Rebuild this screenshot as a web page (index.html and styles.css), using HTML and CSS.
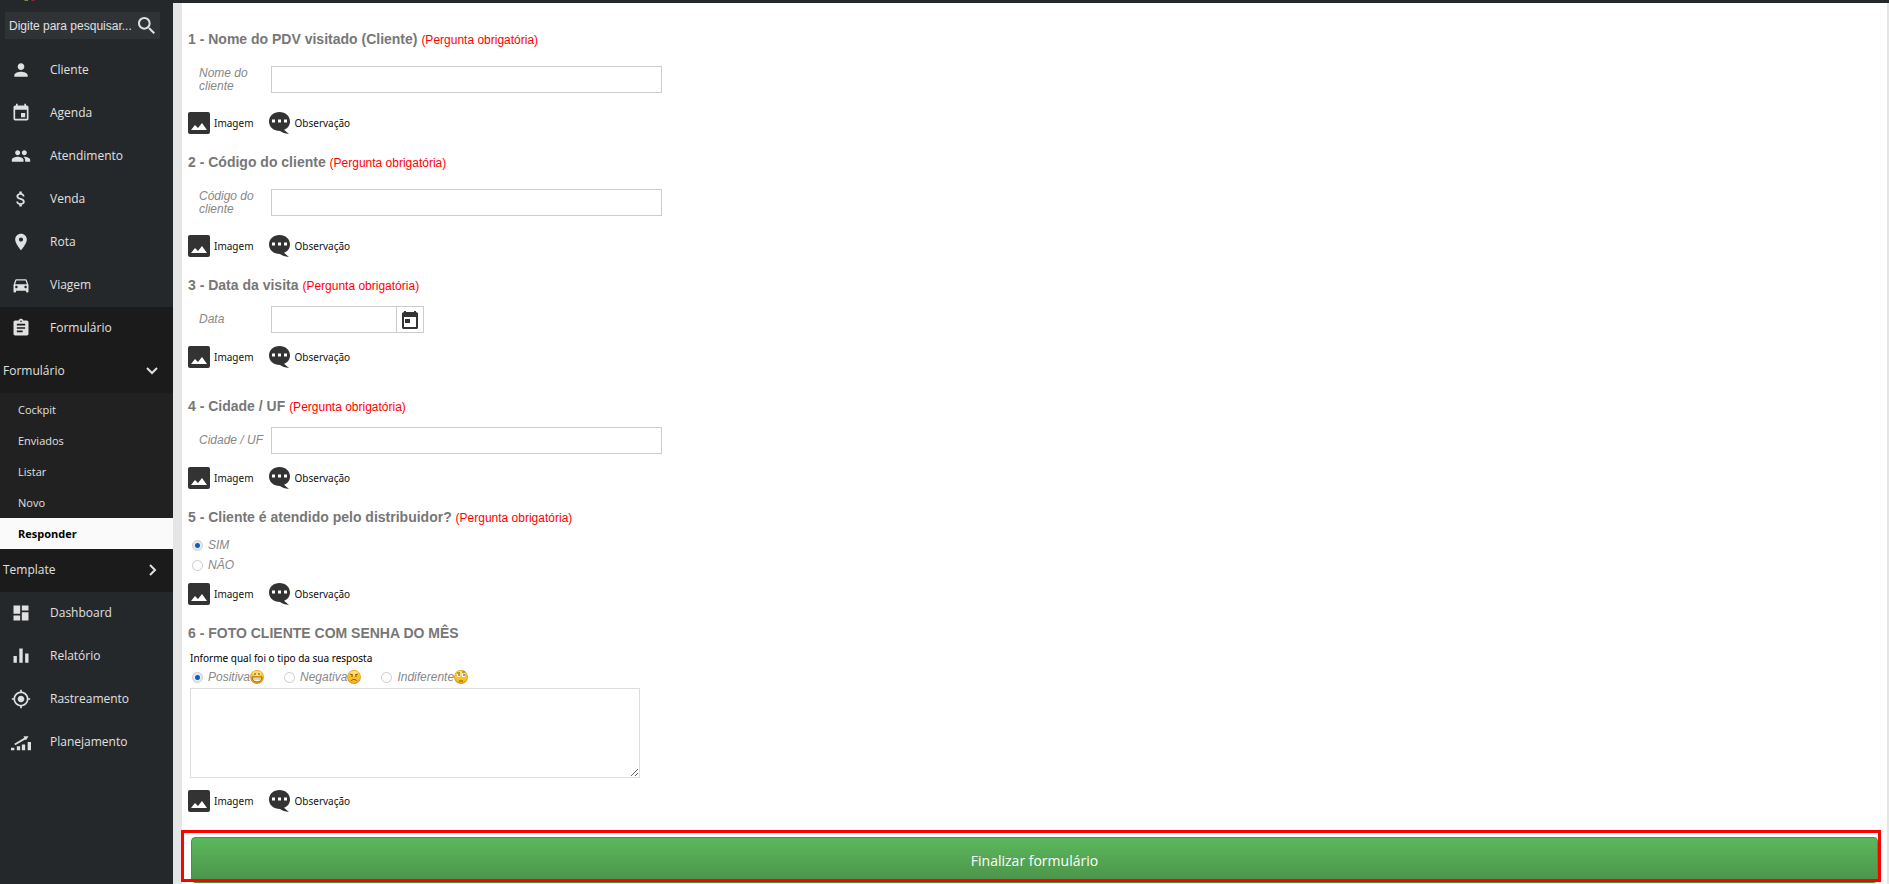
FILE: index.html
```html
<!DOCTYPE html>
<html lang="pt-BR">
<head>
    <meta charset="UTF-8">
    <meta name="viewport" content="width=device-width, initial-scale=1.0">
    <title>Responder formulário</title>
    <link rel="stylesheet" href="styles.css">
</head>
<body>
    <!-- shared icons -->
    <svg class="sprite" aria-hidden="true">
        <symbol id="i-image" viewBox="0 0 22 22">
            <rect width="22" height="22" rx="2" fill="#333"/>
            <path d="M3 18l4-5 3 3 4-5 5 7z" fill="#fff"/>
        </symbol>
        <symbol id="i-chat" viewBox="0 0 22 22">
            <path d="M10.500 0C16.500 0 21 4 21 9.500c0 4-2.500 7-6 8.300L20 22c-4-.3-7-1.500-9-3C4.500 19 0 15 0 9.500S4.500 0 10.500 0z" fill="#333"/>
            <path d="M3 7.500h3v3H3zM9 7.500h3v3H9zM15 7.500h3v3h-3z" fill="#fff"/>
        </symbol>
        <symbol id="i-face" viewBox="0 0 14 14">
            <circle cx="7" cy="7" r="6.900" fill="#dd9612"/>
            <circle cx="7" cy="6.500" r="6.200" fill="#f9c02a"/>
            <ellipse cx="7" cy="3.500" rx="4.500" ry="2.600" fill="#ffdf70"/>
        </symbol>
    </svg>

    <div id="header">
        <svg class="logo" viewBox="0 0 12 1"><path d="M0 0h4v1H1z" fill="#7d8a3a"/><path d="M7 0h4l-1 1H8z" fill="#8c2a35"/></svg>
    </div>

    <div id="page">
        <div id="sidebar">
            <form class="search">
                <input type="text" placeholder="Digite para pesquisar..." aria-label="Digite para pesquisar">
                <button type="button" aria-label="Pesquisar">
                    <svg viewBox="3 3 17.500 17.500"><path d="M15.500 14h-.79l-.28-.27C15.410 12.590 16 11.110 16 9.500 16 5.910 13.090 3 9.500 3S3 5.910 3 9.500 5.910 16 9.500 16c1.610 0 3.090-.59 4.230-1.570l.27.28v.79l5 4.990L20.490 19l-4.990-5zm-6 0C7.010 14 5 11.990 5 9.500S7.010 5 9.500 5 14 7.010 14 9.500 11.990 14 9.500 14z"/></svg>
                </button>
            </form>
            <ul class="menu">
                <li><a href="#"><svg viewBox="0 0 24 24"><path d="M12 12c2.210 0 4-1.790 4-4s-1.790-4-4-4-4 1.790-4 4 1.790 4 4 4zm0 2c-2.670 0-8 1.340-8 4v2h16v-2c0-2.660-5.330-4-8-4z"/></svg>Cliente</a></li>
                <li><a href="#"><svg viewBox="0 0 24 24"><path d="M17 12h-5v5h5v-5zM16 1v2H8V1H6v2H5c-1.110 0-1.990.9-1.990 2L3 19c0 1.100.89 2 2 2h14c1.100 0 2-.9 2-2V5c0-1.100-.9-2-2-2h-1V1h-2zm3 18H5V8h14v11z"/></svg>Agenda</a></li>
                <li><a href="#"><svg viewBox="0 0 24 24"><path d="M16 11c1.660 0 2.990-1.340 2.990-3S17.660 5 16 5c-1.660 0-3 1.340-3 3s1.340 3 3 3zm-8 0c1.660 0 2.990-1.340 2.990-3S9.660 5 8 5C6.340 5 5 6.340 5 8s1.340 3 3 3zm0 2c-2.330 0-7 1.170-7 3.500V19h14v-2.500c0-2.330-4.670-3.500-7-3.500zm8 0c-.29 0-.62.020-.97.050 1.160.84 1.970 1.970 1.970 3.450V19h6v-2.500c0-2.330-4.670-3.500-7-3.500z"/></svg>Atendimento</a></li>
                <li><a href="#"><svg viewBox="0 0 24 24"><path d="M11.800 10.900c-2.270-.59-3-1.200-3-2.150 0-1.090 1.010-1.850 2.700-1.850 1.780 0 2.440.85 2.500 2.100h2.210c-.07-1.720-1.120-3.300-3.210-3.810V3h-3v2.160c-1.940.42-3.500 1.680-3.500 3.610 0 2.310 1.910 3.460 4.700 4.130 2.500.6 3 1.480 3 2.410 0 .69-.49 1.790-2.700 1.790-2.060 0-2.870-.92-2.980-2.100h-2.200c.12 2.190 1.760 3.420 3.680 3.830V21h3v-2.150c1.950-.37 3.500-1.500 3.500-3.550 0-2.840-2.430-3.810-4.700-4.400z"/></svg>Venda</a></li>
                <li><a href="#"><svg viewBox="0 0 24 24"><path d="M12 2C8.130 2 5 5.130 5 9c0 5.250 7 13 7 13s7-7.750 7-13c0-3.870-3.130-7-7-7zm0 9.500c-1.380 0-2.500-1.120-2.500-2.500s1.120-2.500 2.500-2.500 2.500 1.120 2.500 2.500-1.120 2.500-2.500 2.500z"/></svg>Rota</a></li>
                <li><a href="#"><svg viewBox="0 0 24 24"><path d="M18.920 6.010C18.720 5.420 18.160 5 17.500 5h-11c-.66 0-1.210.42-1.420 1.010L3 12v8c0 .55.45 1 1 1h1c.55 0 1-.45 1-1v-1h12v1c0 .55.45 1 1 1h1c.55 0 1-.45 1-1v-8l-2.080-5.990zM6.500 16c-.83 0-1.500-.67-1.500-1.500S5.670 13 6.500 13s1.500.67 1.500 1.500S7.330 16 6.500 16zm11 0c-.83 0-1.500-.67-1.500-1.500s.67-1.500 1.500-1.500 1.500.67 1.500 1.500-.67 1.500-1.500 1.500zM5 11l1.500-4.500h11L19 11H5z"/></svg>Viagem</a></li>
                <li class="open">
                    <a href="#"><svg viewBox="0 0 24 24"><path d="M19 3h-4.180C14.400 1.840 13.300 1 12 1c-1.300 0-2.400.84-2.820 2H5c-1.100 0-2 .9-2 2v14c0 1.100.9 2 2 2h14c1.100 0 2-.9 2-2V5c0-1.100-.9-2-2-2zm-7 0c.55 0 1 .45 1 1s-.45 1-1 1-1-.45-1-1 .45-1 1-1zm2 14H7v-2h7v2zm3-4H7v-2h10v2zm0-4H7V7h10v2z"/></svg>Formulário</a>
                    <a href="#" class="group">Formulário<svg viewBox="0 0 12 12"><path d="M1 3l5 5 5-5"/></svg></a>
                    <ul class="submenu">
                        <li><a href="#">Cockpit</a></li>
                        <li><a href="#">Enviados</a></li>
                        <li><a href="#">Listar</a></li>
                        <li><a href="#">Novo</a></li>
                        <li><a href="#" class="current">Responder</a></li>
                    </ul>
                    <a href="#" class="group">Template<svg viewBox="0 0 12 12"><path d="M4 1l5 5-5 5"/></svg></a>
                </li>
                <li><a href="#"><svg viewBox="0 0 24 24"><path d="M3 13h8V3H3v10zm0 8h8v-6H3v6zm10 0h8V11h-8v10zm0-18v6h8V3h-8z"/></svg>Dashboard</a></li>
                <li><a href="#"><svg viewBox="0 0 24 24"><path d="M3 12h4v8H3zM10 3h4v17h-4zM17 9h4v11h-4z"/></svg>Relatório</a></li>
                <li><a href="#"><svg viewBox="0 0 24 24"><path d="M12 8c-2.210 0-4 1.790-4 4s1.790 4 4 4 4-1.790 4-4-1.790-4-4-4zm8.940 3c-.46-4.170-3.770-7.480-7.940-7.940V1h-2v2.060C6.830 3.520 3.520 6.830 3.060 11H1v2h2.060c.46 4.170 3.770 7.480 7.940 7.940V23h2v-2.060c4.170-.46 7.480-3.770 7.940-7.940H23v-2h-2.060zM12 19c-3.870 0-7-3.130-7-7s3.130-7 7-7 7 3.130 7 7-3.130 7-7 7z"/></svg>Rastreamento</a></li>
                <li><a href="#"><svg viewBox="0 0 24 24"><path d="M0 19h4v3H0zM7 17h4v5H7zM13 15h4v7h-4zM20 12h4v10h-4zM4 14L16 7l-1-2h6l-3 5-1-1L5 16z"/></svg>Planejamento</a></li>
            </ul>
        </div>

        <form id="content">
            <div class="question">
                <h2>1 - Nome do PDV visitado (Cliente) <span>(Pergunta obrigatória)</span></h2>
                <div class="field tall">
                    <label for="nome">Nome do cliente</label>
                    <input type="text" id="nome">
                </div>
                <div class="actions">
                    <button type="button"><svg><use href="#i-image"/></svg>Imagem</button>
                    <button type="button"><svg><use href="#i-chat"/></svg>Observação</button>
                </div>
            </div>

            <div class="question">
                <h2>2 - Código do cliente <span>(Pergunta obrigatória)</span></h2>
                <div class="field tall">
                    <label for="codigo">Código do cliente</label>
                    <input type="text" id="codigo">
                </div>
                <div class="actions">
                    <button type="button"><svg><use href="#i-image"/></svg>Imagem</button>
                    <button type="button"><svg><use href="#i-chat"/></svg>Observação</button>
                </div>
            </div>

            <div class="question date">
                <h2>3 - Data da visita <span>(Pergunta obrigatória)</span></h2>
                <div class="field">
                    <label for="data">Data</label>
                    <input type="text" id="data">
                    <button type="button" class="calendar" aria-label="Abrir calendário">
                        <svg viewBox="0 0 16 18"><path d="M2 0h2v1h8V0h2v1l2 1v15l-1 1H1l-1-1V2l2-1zM2 6v10h12V6zM3 8h5v4H3z" fill="#333" fill-rule="evenodd"/><path d="M3 8h5v4H3z" fill="#333"/></svg>
                    </button>
                </div>
                <div class="actions">
                    <button type="button"><svg><use href="#i-image"/></svg>Imagem</button>
                    <button type="button"><svg><use href="#i-chat"/></svg>Observação</button>
                </div>
            </div>

            <div class="question">
                <h2>4 - Cidade / UF <span>(Pergunta obrigatória)</span></h2>
                <div class="field">
                    <label for="cidade">Cidade / UF</label>
                    <input type="text" id="cidade">
                </div>
                <div class="actions">
                    <button type="button"><svg><use href="#i-image"/></svg>Imagem</button>
                    <button type="button"><svg><use href="#i-chat"/></svg>Observação</button>
                </div>
            </div>

            <div class="question">
                <h2>5 - Cliente é atendido pelo distribuidor? <span>(Pergunta obrigatória)</span></h2>
                <div class="options">
                    <label><input type="radio" name="distribuidor" checked>SIM</label>
                    <label><input type="radio" name="distribuidor">NÃO</label>
                </div>
                <div class="actions">
                    <button type="button"><svg><use href="#i-image"/></svg>Imagem</button>
                    <button type="button"><svg><use href="#i-chat"/></svg>Observação</button>
                </div>
            </div>

            <div class="question">
                <h2>6 - FOTO CLIENTE COM SENHA DO MÊS</h2>
                <p>Informe qual foi o tipo da sua resposta</p>
                <div class="moods">
                    <label><input type="radio" name="tipo" checked>Positiva<svg viewBox="0 0 14 14"><use href="#i-face"/><path d="M4 4h2M8 4h2" stroke="#6b3f08"/><path d="M2 7h10c0 3-2 5-5 5S2 10 2 7z" fill="#fff" stroke="#9a5a08"/><path d="M3 9h8" stroke="#c9a25a"/></svg></label>
                    <label><input type="radio" name="tipo">Negativa<svg viewBox="0 0 14 14"><use href="#i-face"/><path d="M3 4l3 1M11 4L8 5M4 6h2M8 6h2M4 11c1-2 5-2 6 0" stroke="#85500c" fill="none"/></svg></label>
                    <label><input type="radio" name="tipo">Indiferente<svg viewBox="0 0 14 14"><use href="#i-face"/><path d="M3 3h3M8 2h3M5 11h4" stroke="#85500c"/><path d="M3 4h3v3H3zM8 4h3v3H8z" fill="#fff"/><path d="M5 4v2M10 4v2" stroke="#4a2b05"/></svg></label>
                </div>
                <textarea aria-label="Resposta"></textarea>
                <div class="actions">
                    <button type="button"><svg><use href="#i-image"/></svg>Imagem</button>
                    <button type="button"><svg><use href="#i-chat"/></svg>Observação</button>
                </div>
            </div>

            <div class="finish">
                <button type="button">Finalizar formulário</button>
            </div>
        </form>
    </div>
</body>
</html>
```

FILE: styles.css
```css
*{
    margin: 0;
    padding: 0;
    box-sizing: border-box;
}
body{
    display: flex;
    flex-direction: column;
    min-height: 100vh;
    background-color: #e5e5e5;
    font-family: "Open Sans", sans-serif;
    font-size: 12px;
}
ul{
    list-style: none;
}
a{
    color: inherit;
    text-decoration: none;
}
button{
    border: 0;
    background: none;
    font-family: inherit;
    cursor: pointer;
}
.sprite{
    position: absolute;
    width: 0;
    height: 0;
}

#header{
    height: 3px;
    padding-left: 24px;
    background-color: #24282b;
}
.logo{
    display: block;
    width: 12px;
    height: 1px;
}
#page{
    display: flex;
    flex: 1;
}

/* sidebar */
#sidebar{
    width: 173px;
    flex-shrink: 0;
    padding-top: 9px;
    background-color: #24282b;
    color: #e0e0e0;
}
.search{
    display: flex;
    align-items: center;
    height: 27px;
    margin: 0 13px 10px 5px;
    padding: 0 5px 0 4px;
    background-color: #2f3336;
}
.search input{
    flex: 1;
    min-width: 0;
    border: 0;
    outline: 0;
    background: none;
    color: #e0e0e0;
    font-family: "Liberation Sans", Arial, sans-serif;
    font-size: 12px;
}
.search input::placeholder{
    color: #e0e0e0;
}
.search svg{
    display: block;
    width: 17px;
    height: 17px;
    fill: #e0e0e0;
}
.menu a{
    display: flex;
    align-items: center;
    height: 43px;
    padding: 0 0 2px 11px;
}
.menu svg{
    width: 20px;
    height: 20px;
    margin-right: 19px;
    fill: #e0e0e0;
}
.menu .open{
    background-color: #1b1b1b;
}
.menu .group{
    justify-content: space-between;
    padding-left: 3px;
}
.menu .group svg{
    width: 12px;
    height: 12px;
    margin-right: 15px;
    fill: none;
    stroke: #e0e0e0;
    stroke-width: 2;
}
.submenu{
    padding-top: 1px;
    background-color: #212121;
}
.menu .submenu a{
    height: 31px;
    padding: 0 0 0 18px;
    font-size: 11px;
}
.menu .submenu .current{
    background-color: #fafafa;
    color: #000;
    font-weight: bold;
}

/* form */
#content{
    flex: 1;
    margin: 0 2px 0 9px;
    padding: 26px 6px 1px;
    background-color: #fff;
}
.question{
    margin-bottom: 18px;
}
.question.date{
    margin-bottom: 28px;
}
.question h2{
    color: #777;
    font: bold 14px/20px "Liberation Sans", Arial, sans-serif;
}
.question h2 span{
    color: #f00;
    font-size: 12px;
    font-weight: normal;
}
.field{
    display: flex;
    align-items: center;
    padding: 10px 0 13px 11px;
}
.field.tall{
    padding: 16px 0 19px 11px;
}
.field label{
    width: 72px;
    padding-right: 4px;
    color: #888;
    font: italic 12px/13px "Liberation Sans", Arial, sans-serif;
}
.field input{
    width: 391px;
    height: 27px;
    border: 1px solid #ccc;
}
.date .field input{
    width: 126px;
}
.calendar{
    width: 27px;
    height: 27px;
    border: 1px solid #ccc;
    border-left: 0;
}
.calendar svg{
    display: block;
    width: 16px;
    height: 18px;
    margin: 0 auto;
}
.actions{
    display: flex;
    gap: 15px;
}
.actions button{
    display: flex;
    align-items: center;
    gap: 4px;
    height: 22px;
    color: #111;
    font-family: "Noto Sans", sans-serif;
    font-size: 10px;
}
.actions svg{
    width: 22px;
    height: 22px;
}
.options{
    padding: 7px 0 8px 4px;
}
.options label, .moods label{
    display: flex;
    align-items: center;
    height: 20px;
    color: #888;
    font: italic 12px/20px "Liberation Sans", Arial, sans-serif;
}
input[type=radio]{
    appearance: none;
    width: 11px;
    height: 11px;
    margin-right: 5px;
    border: 1px solid #ccc;
    border-radius: 50%;
    background-color: #fff;
}
input[type=radio]:checked{
    background: radial-gradient(circle, #0a5fc4 2px, #e4eaf2 3px);
}
.question p{
    padding: 8px 0 2px 2px;
    color: #000;
    font-family: "Noto Sans", sans-serif;
    font-size: 10px;
    line-height: 14px;
}
.moods{
    display: flex;
    gap: 20px;
    padding-left: 4px;
}
.moods svg{
    width: 14px;
    height: 14px;
}
.question textarea{
    display: block;
    width: 450px;
    height: 90px;
    margin: 1px 0 12px 2px;
    border: 1px solid #ddd;
}

.finish{
    position: relative;
    padding: 7px 3px 0;
}
/* red frame drawn over the button */
.finish::after{
    content: "";
    position: absolute;
    top: 0;
    right: 0;
    bottom: 1px;
    left: -7px;
    border: 3px solid #f00;
    pointer-events: none;
}
.finish button{
    display: block;
    width: 100%;
    height: 46px;
    border: 1px solid #419641;
    border-radius: 4px;
    background-image: linear-gradient(#5cb85c, #4b934b);
    color: #fff;
    font-size: 14px;
}
```
